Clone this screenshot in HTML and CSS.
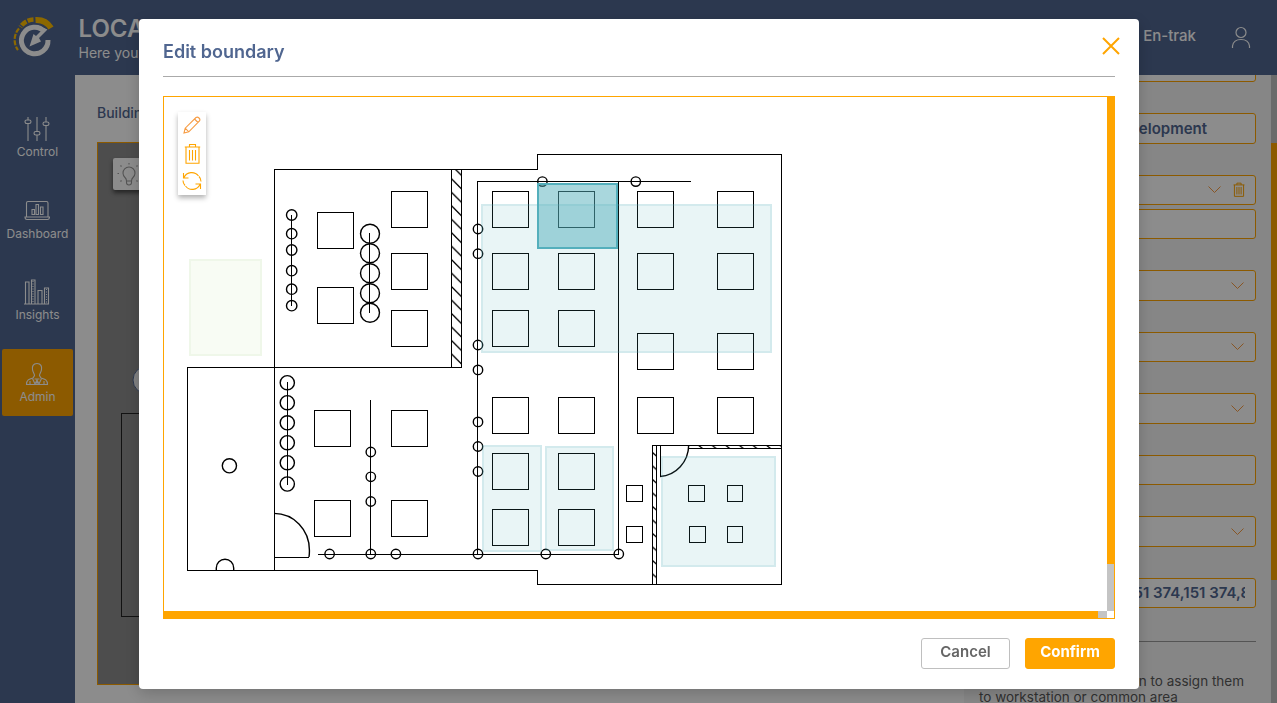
FILE: index.html
```
<!DOCTYPE html>
<html lang="en">
<head>
<meta charset="utf-8">
<title>Edit boundary</title>
<link rel="stylesheet" href="styles.css">
</head>
<body>
<svg class="defs" width="0" height="0">
  <defs>
    <g id="trash"><path d="M.8 4h15.400M5.500 4V1.500h6V4M2 4v16.200h13V4M5.500 7v10.500M8.500 7v10.500M11.500 7v10.500"/></g>
    <path id="chevron" d="M.5.500 6.500 6.500 12.500.500"/>
    <pattern id="wall" width="20" height="13.470" patternUnits="userSpaceOnUse" x="451" y="178.300"><path d="M0 0l10.500 10.500" stroke="#000" stroke-width="1.300"/></pattern>
    <pattern id="wallV" width="10" height="13.500" patternUnits="userSpaceOnUse" x="652" y="452"><path d="M0 0l4.500 4" stroke="#000" stroke-width="1.300"/></pattern>
    <pattern id="wallH" width="13.600" height="6" patternUnits="userSpaceOnUse" x="698" y="445"><path d="M0 0l4.500 3.500" stroke="#000" stroke-width="1.300"/></pattern>
  </defs>
</svg>
<div class="app">
  <nav class="sidebar">
    <div class="logo">
      <svg width="42" height="46" viewBox="0 0 42 46" fill="none">
        <path d="M22.500 6A17 17 0 0 1 38 14" stroke="#ffbe00" stroke-width="6"/>
        <path d="M20.500 5.500A16.500 16.500 0 0 0 7.500 13" stroke="#ffbe00" stroke-width="4.500" stroke-dasharray="6 1.400"/>
        <path d="M6 14.500A17 17 0 0 0 5 36" stroke="#ffbe00" stroke-width="2.200" stroke-dasharray="5 1.400"/>
        <path d="M31.500 17.500A13.300 13.300 0 1 0 35 26" stroke="#fff" stroke-width="5"/>
        <path d="M34.500 15.500 26 24l2 3.500-11.500 5L20.500 20l2.500 2 8-8z" fill="#fff"/>
      </svg>
    </div>
    <a class="nav"><svg width="26" height="26" viewBox="0 0 26 26"><path d="M4 1v3M4 8v17M13 1v14M13 19v6M22 1v5M22 10v15"/><rect x="1" y="4" width="6" height="3.500" rx="1.700"/><rect x="10" y="15.500" width="6" height="3.500" rx="1.700"/><rect x="19" y="6" width="6" height="3.500" rx="1.700"/></svg><span>Control</span></a>
    <a class="nav"><svg width="26" height="26" viewBox="0 0 26 26"><path d="M2.500 19V5q0-1.500 1.500-1.500h18.500Q24 3.500 24 5v14M1 19h24.500q0 2.500-2 2.500H3q-2 0-2-2.500z"/><path d="M8 16.500v-5h2.500v5zM12 16.500v-10h2.500v10zM16.500 16.500V9H19v7.500z"/></svg><span>Dashboard</span></a>
    <a class="nav"><svg width="26" height="26" viewBox="0 0 26 26"><path d="M1.500 25V3H5v22zM7.500 25V1h3.500v24zM14 25V11.500h4V25zM20.500 25V9h4v16zM0 25h25"/><path d="M9 2v22M22.500 10v14" stroke-dasharray="1 1.500"/></svg><span>Insights</span></a>
    <a class="nav active"><svg width="26" height="26" viewBox="0 0 26 26"><path d="M13 2.500c-4 0-5 3-4.500 6 .3 3 2 4 2 6L9 17c-4 1-6.500 2-6.500 6.500h21C23.500 19 21 18 17 17l-1.500-2.500c0-2 1.700-3 2-6 .5-3-.5-6-4.500-6z"/><path d="M8.500 17.500 11 23l2-4 2 4 2.500-5.500M10.500 18h5M13 19v4M6 20v3M20 20v3"/></svg><span>Admin</span></a>
  </nav>
  <div class="body">
    <header class="topbar">
      <div class="heading"><h1>LOCA</h1><p>Here you</p></div>
      <div class="user"><span>En-trak</span><svg width="20" height="23" viewBox="0 0 20 23"><circle cx="10" cy="6.500" r="5"/><path d="M1.500 22v-2q1-6.500 8.500-6.500t8.500 6.500v2"/></svg></div>
    </header>
    <div class="content">
      <section class="plan-section">
        <div class="label">Building</div>
        <div class="map">
          <svg width="200" height="541" viewBox="98 143 200 541" fill="none">
            <rect x="121.500" y="413.500" width="200" height="203" stroke="#222"/>
            <circle cx="147" cy="380" r="14" fill="#eee" stroke="#506690"/>
          </svg>
          <div class="bulb"><svg width="26" height="26" viewBox="0 0 26 26"><path d="M10.500 19q0-2-1.500-3.500a6 6 0 1 1 8 0Q15.500 17 15.500 19zM10.500 19v1.500q0 2.500 2.500 2.500t2.500-2.500V19M3 11.500H1.500M24.500 11.500H23M5.500 4.500l-1-1M20.500 4.500l1-1M13 2.500V1M5.500 18.500l-1 1M20.500 18.500l1 1"/></svg></div>
        </div>
      </section>
      <aside class="panel">
        <div class="field first"></div>
        <div class="field f31">velopment</div>
        <div class="field"><svg class="chev" width="13" height="8"><use href="#chevron"/></svg><svg class="trash" width="12" height="15" viewBox="0 0 17 21"><use href="#trash"/></svg></div>
        <div class="field near"></div>
        <div class="field f31"><svg class="chev" width="13" height="8"><use href="#chevron"/></svg></div>
        <div class="field"><svg class="chev" width="13" height="8"><use href="#chevron"/></svg></div>
        <div class="field f31"><svg class="chev" width="13" height="8"><use href="#chevron"/></svg></div>
        <div class="field"></div>
        <div class="field f31"><svg class="chev" width="13" height="8"><use href="#chevron"/></svg></div>
        <div class="field coords"><div class="clip"><span>51 374,151 374,8</span></div></div>
        <hr>
        <div class="hint"><p class="end">n to assign them</p><p>to workstation or common area</p></div>
      </aside>
      <div class="page-scroll"><div class="page-thumb"></div></div>
    </div>
  </div>
</div>

<div class="mask">
  <div class="modal">
    <div class="modal-head">
      <h2>Edit boundary</h2>
      <svg class="close" width="18" height="18" viewBox="0 0 18 18"><path d="M1 1l16 16M17 1 1 17"/></svg>
    </div>
    <div class="canvas">
      <div class="view">
        <svg width="943" height="514" viewBox="164 97 943 514" fill="none" stroke="#000">
          <g shape-rendering="crispEdges">
            <path d="M274.500 570V169.500H537.500V154.500H781.500V584.500H537.500V570.500H187.500V367.500H461.500V169.500M451.500 169V367"/>
            <path d="M477.500 554V181.500H691M618.500 181V554M318 554.500H619M370.500 400V554M291.500 215V306M369.500 233V313M287.500 382V485M274 557.500H309"/>
            <path d="M652.500 584V445.500H781M656.500 445V584M660.500 445V476M689 448.500H781"/>
            <path d="M317.500 212.500h36v36h-36zM317.500 287.500h36v36h-36zM391.500 191.500h36v36h-36zM391.500 253.500h36v36h-36zM391.500 310.500h36v36h-36zM314.500 410.500h36v36h-36zM314.500 500.500h36v36h-36zM391.500 410.500h36v36h-36zM391.500 500.500h36v36h-36z"/>
            <path d="M492.500 191.500h36v36h-36zM492.500 253.500h36v36h-36zM492.500 310.500h36v36h-36zM492.500 397.500h36v36h-36zM492.500 453.500h36v36h-36zM492.500 509.500h36v36h-36zM558.500 191.500h36v36h-36zM558.500 253.500h36v36h-36zM558.500 310.500h36v36h-36zM558.500 397.500h36v36h-36zM558.500 453.500h36v36h-36zM558.500 509.500h36v36h-36z"/>
            <path d="M637.500 191.500h36v36h-36zM637.500 253.500h36v36h-36zM637.500 333.500h36v36h-36zM637.500 397.500h36v36h-36zM717.500 191.500h36v36h-36zM717.500 253.500h36v36h-36zM717.500 333.500h36v36h-36zM717.500 397.500h36v36h-36z"/>
            <path d="M626.500 485.500h16v16h-16zM626.500 526.500h16v16h-16zM688.500 485.500h16v16h-16zM727.500 485.500h15v16h-15zM689.500 526.500h16v16h-16zM727.500 526.500h15v16h-15z"/>
          </g>
          <g stroke="none">
            <rect x="451" y="169" width="11" height="198" fill="url(#wall)"/>
            <rect x="652" y="448" width="5" height="136" fill="url(#wallV)"/>
            <rect x="692" y="445" width="90" height="4" fill="url(#wallH)"/>
          </g>
          <g stroke-width="1.400">
            <path d="M274 513.400C294 513.400 309.400 530 309.400 550Q309.500 554 309 557M660 476.500C676 475.500 688.500 462 688.700 445M216.300 570v-2a8.700 8.700 0 0 1 17.400 0v2"/>
            <circle cx="291.700" cy="215" r="5.200"/><circle cx="291.700" cy="233.700" r="5.200"/><circle cx="291.700" cy="250" r="5.200"/><circle cx="291.700" cy="270.700" r="5.200"/><circle cx="291.700" cy="289.200" r="5.200"/><circle cx="291.700" cy="305.700" r="5.200"/>
            <circle cx="370" cy="233.700" r="9.500"/><circle cx="370" cy="253.200" r="9.500"/><circle cx="370" cy="273.300" r="9.500"/><circle cx="370" cy="293.200" r="9.500"/><circle cx="370" cy="312.700" r="9.500"/>
            <circle cx="287.300" cy="382.700" r="7.100"/><circle cx="287.300" cy="402.700" r="7.100"/><circle cx="287.300" cy="422.800" r="7.100"/><circle cx="287.300" cy="442.700" r="7.100"/><circle cx="287.300" cy="462.700" r="7.100"/><circle cx="287.300" cy="484" r="7.100"/><circle cx="229.400" cy="465.800" r="7.100"/>
            <circle cx="542.400" cy="181.600" r="4.700"/><circle cx="635.800" cy="181.600" r="4.700"/>
            <circle cx="478" cy="229" r="4.700"/><circle cx="478" cy="253.700" r="4.700"/><circle cx="478" cy="345" r="4.700"/><circle cx="478" cy="369.900" r="4.700"/><circle cx="478" cy="421.900" r="4.700"/><circle cx="478" cy="446.500" r="4.700"/><circle cx="478" cy="471.500" r="4.700"/>
            <circle cx="478" cy="554" r="4.700"/><circle cx="545.800" cy="554" r="4.700"/><circle cx="618.800" cy="554" r="4.700"/><circle cx="329.600" cy="554" r="4.700"/><circle cx="370.800" cy="554" r="4.700"/><circle cx="395.900" cy="554" r="4.700"/>
            <circle cx="370.800" cy="452" r="4.700"/><circle cx="370.800" cy="476.800" r="4.700"/><circle cx="370.800" cy="501.500" r="4.700"/>
          </g>
          <rect class="zone green" x="190" y="260" width="71" height="95"/>
          <rect class="zone" x="482" y="205" width="289" height="147"/>
          <rect class="zone" x="483" y="446" width="58" height="105"/>
          <rect class="zone" x="546" y="447" width="67" height="103"/>
          <rect class="zone" x="662" y="457" width="113" height="109"/>
          <rect class="zone selected" x="538" y="184" width="79" height="64"/>
        </svg>
        <div class="tools">
          <svg width="18" height="18" viewBox="0 0 18 18" stroke="#f79c43"><path d="M1 17l1.200-4.800L13 1.500q1.500-1 3 .5t.5 3L5.800 15.800zM11.500 3l3.500 3.500M2.200 12.200l3.600 3.600"/></svg>
          <svg width="17" height="21" viewBox="0 0 17 21"><use href="#trash"/></svg>
          <svg width="20" height="18" viewBox="0 0 20 18"><path d="M2 5.500A8.500 8.500 0 0 1 16.500 4M18 12.500A8.500 8.500 0 0 1 3.500 14M1.500 1v5h5M18.500 17v-5h-5M1 8.500q0 3 2 5M19 9.500q0-3-2-5"/></svg>
        </div>
      </div>
      <div class="vtrack"><div class="vthumb"></div></div>
      <div class="htrack"><div class="hthumb"></div></div>
    </div>
    <div class="modal-foot">
      <button class="btn">Cancel</button>
      <button class="btn primary">Confirm</button>
    </div>
  </div>
</div>
</body>
</html>
```

FILE: styles.css
```
* { box-sizing: border-box; }
body { margin: 0; width: 1277px; height: 703px; overflow: hidden; font-family: Inter, "Liberation Sans", sans-serif; }
h1, h2, p { margin: 0; }
.defs { position: absolute; }

.app { display: flex; height: 703px; overflow: hidden; background: #506690; }
.sidebar { width: 75px; flex: none; padding: 14px 2px 0; color: #fff; }
.logo { height: 90px; padding-left: 11px; }
.nav { display: flex; flex-direction: column; align-items: center; width: 71px; height: 67px; margin-bottom: 14.670px; padding-top: 12px; border-radius: 2px; font-size: 12px; line-height: 16px; }
.nav svg { margin: 0 1px 2px 0; fill: none; stroke: #fff; stroke-width: 1.100; }
.nav.active { background: #ffa500; }

.body { flex: 1; display: flex; flex-direction: column; min-width: 0; }
.topbar { flex: none; height: 75px; display: flex; justify-content: space-between; color: #fff; padding: 14px 26px 0 3.500px; }
.heading { white-space: nowrap; }
.heading h1 { font-size: 24px; line-height: 30px; font-weight: 600; }
.heading p { font-size: 14px; line-height: 18px; }
.user { display: flex; gap: 35px; font-size: 15px; line-height: 44px; font-weight: 500; }
.user svg { margin-top: 12px; fill: none; stroke: #fff; stroke-width: 1.200; }

.content { flex: 1; display: flex; background: #fff; min-height: 0; }
.plan-section { flex: 1; padding: 28px 0 0 22px; }
.label { height: 39px; line-height: 19px; font-size: 14px; font-weight: 500; color: #506690; }
.map { position: relative; height: 543px; border: 1px solid #ffa500; background: #8c8c8c; }
.map > svg { display: block; }
.bulb { position: absolute; left: 15px; top: 15px; width: 32px; height: 32px; padding: 4px 3px; border-radius: 2px; background: #fff; box-shadow: 0 3px 4px rgba(0, 0, 0, .5); }
.bulb svg { fill: none; stroke: #999; stroke-width: 1.100; }
.panel { width: 307px; flex: none; padding: 0 15px; background: #f5f5f5; overflow: hidden; color: #506690; }
.field { display: flex; align-items: center; justify-content: flex-end; height: 30px; margin-bottom: 31px; border: 1px solid #ffa500; border-radius: 3px; padding: 0 10px; background: #fff; font-size: 15px; font-weight: 600; white-space: nowrap; }
.f31 { height: 31px; }
.field.first { height: 30px; margin-top: -23px; }
.field.first + .field { padding: 0 48px 1px 0; }
.field.near { margin-top: -27px; }
.field.coords { margin-bottom: 33px; padding-bottom: 1px; }
.clip { flex: 1; overflow: hidden; display: flex; justify-content: flex-end; }
.clip span { margin-right: -5px; }
.chev { fill: none; stroke: #f79c43; margin-right: 1px; }
.trash { margin: -2px 0 0 11px; fill: none; stroke: #ffa500; stroke-width: 1.400; }
.panel hr { margin: 0 0 31px; border: 0; border-top: 1px solid #999; }
.hint { width: 265px; font-size: 13.500px; line-height: 16px; color: #595959; white-space: nowrap; }
.hint .end { text-align: right; }
.page-scroll { width: 6px; background: #c4c4c4; padding-top: 68px; }
.page-thumb { height: 437px; background: #ffa500; }

.mask { position: fixed; inset: 0; padding: 19px 138px 0 139px; background: rgba(0, 0, 0, .45); }
.modal { height: 670px; padding: 0 24px; border-radius: 4px; background: #fff; box-shadow: 0 4px 16px rgba(0, 0, 0, .2); }
.modal-head { display: flex; justify-content: space-between; height: 58px; border-bottom: 1px solid #aaa; }
.modal-head h2 { margin-top: 21px; font-size: 18px; line-height: 24px; font-weight: 600; color: #506690; }
.close { margin: 18px -5px 0 0; stroke: #ffa500; stroke-width: 2; }
.canvas { display: grid; grid-template: 514px 7px / 943px 7px; width: 952px; height: 523px; margin-top: 19px; border: 1px solid #ffa500; }
.view { position: relative; }
.view > svg { display: block; }
.vtrack, .htrack { background: #c4c4c4; }
.vthumb { height: 467px; background: #ffa500; }
.hthumb { width: 934px; height: 7px; background: #ffa500; }
.zone { stroke: #54afbc; stroke-width: 2; fill: rgba(84, 175, 188, .5); opacity: .25; }
.zone.green { stroke: #c3e3ab; fill: rgba(195, 227, 171, .5); }
.zone.selected { opacity: 1; }
.tools { position: absolute; left: 14px; top: 15px; width: 28px; height: 83px; display: flex; flex-direction: column; align-items: center; gap: 8.500px; padding-top: 4px; background: #fff; box-shadow: 0 3px 5px rgba(0, 0, 0, .3); }
.tools svg { flex: none; fill: none; stroke-width: 1.100; }
.tools svg:not([stroke]) { stroke: #ffa500; }
.modal-foot { display: flex; justify-content: flex-end; gap: 15px; padding-top: 19px; }
.btn { width: 89px; height: 31px; padding: 0 0 4px; border: 1px solid #bfbfbf; border-radius: 3px; background: #fff; font: 600 15px Inter, sans-serif; color: #666; }
.btn.primary { width: 90px; border-color: #ffa500; background: #ffa500; color: #fff; font-weight: 700; }
```
